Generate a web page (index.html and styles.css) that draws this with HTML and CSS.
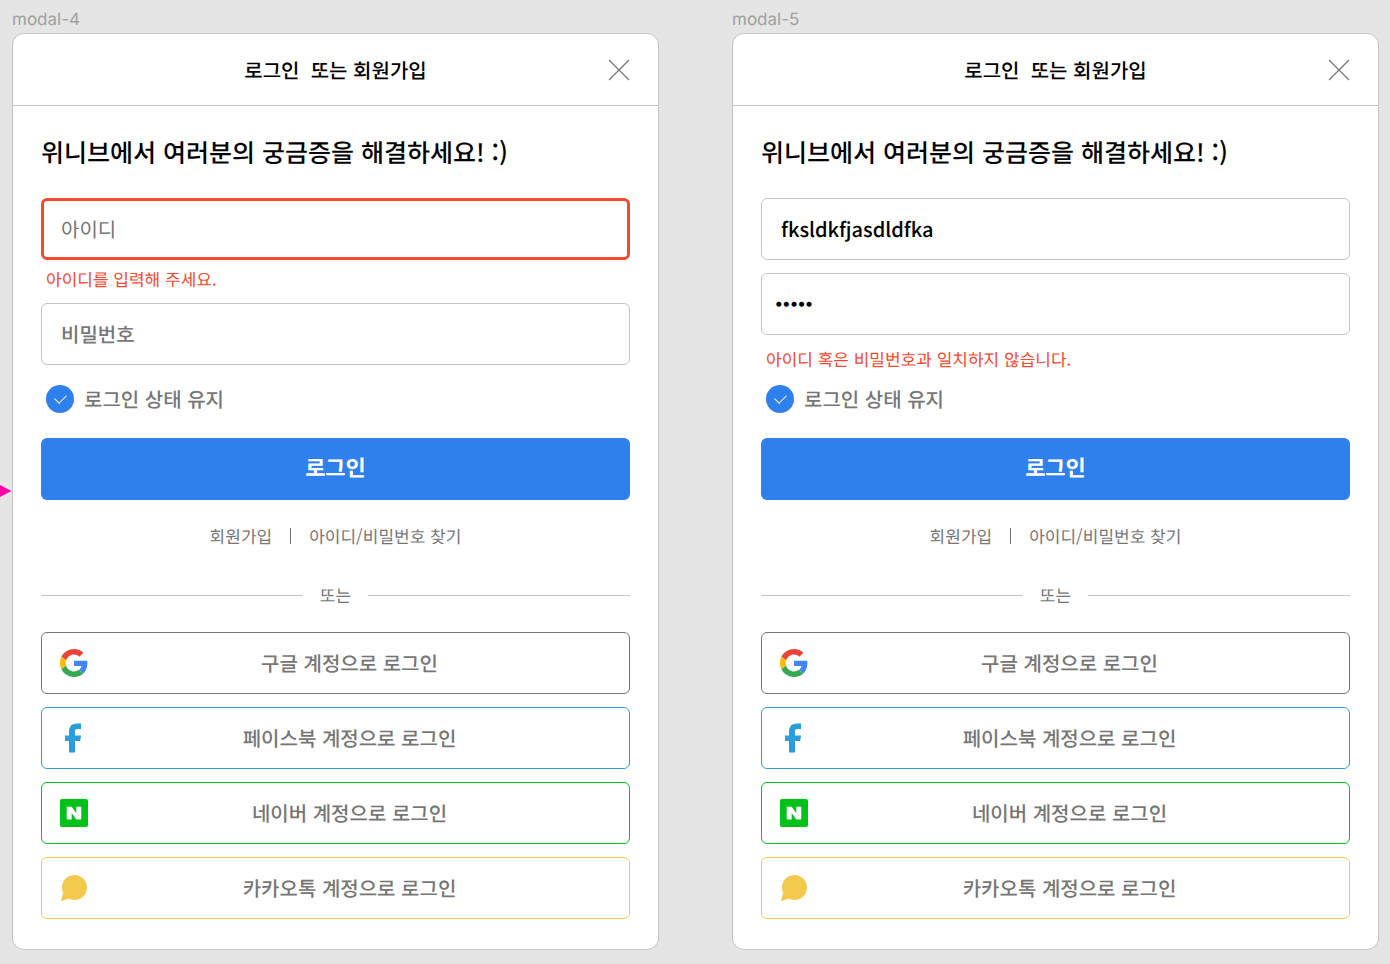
FILE: index.html
```html
<!DOCTYPE html>
<html lang="ko">
<head>
<meta charset="utf-8">
<meta name="viewport" content="width=device-width, initial-scale=1">
<title>로그인 또는 회원가입</title>
<link rel="stylesheet" href="styles.css">
</head>
<body>
<svg class="sprite" aria-hidden="true">
  <symbol id="close" viewBox="0 0 22 22"><path d="M1 1l20 20M21 1L1 21" fill="none" stroke="#767676" stroke-width="1.2"/></symbol>
  <symbol id="google" viewBox="0 0 48 48">
    <path fill="#ea4335" d="M24 9.500c3.540 0 6.710 1.220 9.210 3.600l6.850-6.850C35.900 2.380 30.470 0 24 0 14.620 0 6.510 5.380 2.560 13.220l7.980 6.190C12.430 13.720 17.740 9.500 24 9.500z"/>
    <path fill="#4285f4" d="M46.980 24.550c0-1.570-.15-3.090-.38-4.550H24v9.020h12.940c-.58 2.960-2.260 5.480-4.780 7.180l7.730 6c4.510-4.180 7.090-10.360 7.090-17.650z"/>
    <path fill="#fbbc05" d="M10.530 28.590c-.48-1.450-.76-2.990-.76-4.590s.27-3.140.76-4.590l-7.980-6.190C.92 16.460 0 20.120 0 24c0 3.880.92 7.540 2.560 10.780l7.970-6.190z"/>
    <path fill="#34a853" d="M24 48c6.480 0 11.930-2.130 15.890-5.810l-7.730-6c-2.150 1.450-4.920 2.300-8.160 2.300-6.260 0-11.570-4.220-13.470-9.910l-7.980 6.190C6.510 42.620 14.620 48 24 48z"/>
  </symbol>
  <symbol id="facebook" viewBox="0 0 28 30"><path fill="#2d9cdb" d="M9 29.500V18H5v-5.600h4V8.800C9 3.400 11.800 .5 17 .5h4v5.600h-3.500c-1.900 0-2.500.8-2.500 2.500v3.800h6l-.8 5.600H15v11.500z"/></symbol>
  <symbol id="naver" viewBox="0 0 28 28"><rect width="28" height="28" rx="2" fill="#00c11a"/><path fill="#fff" d="M6.700 7.700h5l4.600 6.600V7.700H21.300v12.800h-5l-4.600-6.600v6.600h-5z"/></symbol>
  <symbol id="kakao" viewBox="0 0 28 28"><path fill="#f2c94c" d="M14.500 1A12.500 12.500 0 1 1 8.700 24.600L.8 27.200 3.200 18.900A12.500 12.500 0 0 1 14.500 1z"/></symbol>
</svg>

<main class="board">
  <svg class="marker" viewBox="0 0 12 14" aria-hidden="true"><path d="M0 1l11.500 6L0 13z" fill="#ff00a8"/></svg>

  <section class="frame">
    <h2 class="frame-name">modal-4</h2>
    <div class="modal">
      <header class="modal-head">
        <h3 class="modal-title">로그인&nbsp; 또는 회원가입</h3>
        <button class="close" type="button" aria-label="닫기"><svg><use href="#close"/></svg></button>
      </header>
      <form class="modal-body">
        <p class="greeting">위니브에서 여러분의 궁금증을 해결하세요! :)</p>
        <input class="field field-error" type="text" placeholder="아이디" aria-label="아이디" aria-describedby="id-error">
        <p class="error error-between" id="id-error">아이디를 입력해 주세요.</p>
        <input class="field" type="password" placeholder="비밀번호" aria-label="비밀번호">
        <label class="keep keep-spaced"><input class="check" type="checkbox" checked><span>로그인 상태 유지</span></label>
        <button class="submit" type="button">로그인</button>
        <nav class="links"><a href="#join">회원가입</a><span class="bar"></span><a href="#find">아이디/비밀번호 찾기</a></nav>
        <div class="divider"><span>또는</span></div>
        <div class="socials">
          <button class="social google" type="button"><svg class="logo"><use href="#google"/></svg><span>구글 계정으로 로그인</span></button>
          <button class="social facebook" type="button"><svg class="logo logo-tall"><use href="#facebook"/></svg><span>페이스북 계정으로 로그인</span></button>
          <button class="social naver" type="button"><svg class="logo"><use href="#naver"/></svg><span>네이버 계정으로 로그인</span></button>
          <button class="social kakao" type="button"><svg class="logo"><use href="#kakao"/></svg><span>카카오톡 계정으로 로그인</span></button>
        </div>
      </form>
    </div>
  </section>

  <section class="frame">
    <h2 class="frame-name">modal-5</h2>
    <div class="modal">
      <header class="modal-head">
        <h3 class="modal-title">로그인&nbsp; 또는 회원가입</h3>
        <button class="close" type="button" aria-label="닫기"><svg><use href="#close"/></svg></button>
      </header>
      <form class="modal-body">
        <p class="greeting">위니브에서 여러분의 궁금증을 해결하세요! :)</p>
        <input class="field" type="text" value="fksldkfjasdldfka" aria-label="아이디">
        <input class="field field-secret" type="password" value="abcde" aria-label="비밀번호" aria-describedby="login-error">
        <p class="error error-after" id="login-error">아이디 혹은 비밀번호과 일치하지 않습니다.</p>
        <label class="keep"><input class="check" type="checkbox" checked><span>로그인 상태 유지</span></label>
        <button class="submit" type="button">로그인</button>
        <nav class="links"><a href="#join">회원가입</a><span class="bar"></span><a href="#find">아이디/비밀번호 찾기</a></nav>
        <div class="divider"><span>또는</span></div>
        <div class="socials">
          <button class="social google" type="button"><svg class="logo"><use href="#google"/></svg><span>구글 계정으로 로그인</span></button>
          <button class="social facebook" type="button"><svg class="logo logo-tall"><use href="#facebook"/></svg><span>페이스북 계정으로 로그인</span></button>
          <button class="social naver" type="button"><svg class="logo"><use href="#naver"/></svg><span>네이버 계정으로 로그인</span></button>
          <button class="social kakao" type="button"><svg class="logo"><use href="#kakao"/></svg><span>카카오톡 계정으로 로그인</span></button>
        </div>
      </form>
    </div>
  </section>
</main>
</body>
</html>
```
FILE: styles.css
```css
* { box-sizing: border-box; }

body {
  margin: 0;
  background: #e5e5e5;
  color: #000;
  font-family: "Noto Sans CJK KR", sans-serif;
  font-size: 20px;
  font-weight: 500;
  text-rendering: geometricPrecision;
}

h2, h3, p { margin: 0; font-weight: 500; }

button, input { font: inherit; text-rendering: inherit; }
button { cursor: pointer; }

.sprite { position: absolute; width: 0; height: 0; }

.board {
  position: relative;
  display: grid;
  grid-template-columns: 1fr 1fr;
  gap: 73px;
  padding: 8px 11px 14px 12px;
}

.marker {
  position: absolute;
  left: 0;
  top: 484px;
  width: 12px;
  height: 14px;
}

.frame-name {
  color: #a0a0a0;
  font: 400 17px/25px Inter, sans-serif;
}

.modal {
  background: #fff;
  border: 1px solid #c4c4c4;
  border-radius: 12px;
}

.modal-head {
  display: grid;
  grid-template-columns: 1fr auto 1fr;
  align-items: center;
  padding: 20px 28px;
  border-bottom: 1px solid #c4c4c4;
}

.modal-title {
  grid-column: 2;
  font-size: 20px;
  line-height: 31px;
}

.close {
  justify-self: end;
  padding: 0;
  border: 0;
  background: none;
}

.close svg { display: block; width: 22px; height: 22px; }

.modal-body { padding: 28px 28px 30px; }

.greeting {
  margin-bottom: 28px;
  font-size: 25px;
  line-height: 36px;
}

.field {
  display: block;
  width: 100%;
  height: 62px;
  padding: 0 19px 2px;
  border: 1px solid #c4c4c4;
  border-radius: 6px;
  background: #fff;
  color: #000;
  outline: 0;
}

.field::placeholder { color: #767676; opacity: 1; }
.field + .field { margin-top: 13px; }
.field-error { padding: 0 17px 2px; border: 3px solid #f4492f; font-weight: 400; }
.field-secret { padding: 0 13px 2px; font-family: Inter, sans-serif; font-size: 16px; font-weight: 700; }

.error {
  padding-left: 5px;
  color: #f4492f;
  font-size: 17px;
  font-weight: 400;
  line-height: 24px;
}

.error-between { margin: 7px 0 12px; }
.error-after { margin: 12px 0 14px; }

.keep {
  display: flex;
  align-items: center;
  gap: 10px;
  padding-left: 5px;
  color: #767676;
  line-height: 28px;
}

.keep-spaced { margin-top: 20px; }

.check {
  appearance: none;
  display: grid;
  place-items: center;
  width: 28px;
  height: 28px;
  margin: 0;
  border-radius: 50%;
  background: #2f80ed;
}

.check::after {
  content: "";
  width: 10px;
  height: 6px;
  margin-bottom: 3px;
  border: solid #fff;
  border-width: 0 0 1px 1px;
  transform: rotate(-45deg);
}

.submit {
  display: block;
  width: 100%;
  height: 62px;
  margin-top: 25px;
  padding: 0 0 4px;
  border: 0;
  border-radius: 6px;
  background: #2f80ed;
  color: #fff;
  font-size: 22px;
  font-weight: 700;
}

.links {
  display: flex;
  justify-content: center;
  align-items: center;
  gap: 18px;
  margin-top: 24px;
  font-size: 17px;
  font-weight: 400;
  line-height: 24px;
}

.links a { color: #767676; text-decoration: none; }
.bar { width: 1px; height: 16px; background: #767676; }

.divider {
  display: flex;
  align-items: center;
  gap: 17px;
  margin: 35px 0 25px;
  color: #767676;
  font-size: 17px;
  font-weight: 400;
  line-height: 24px;
}

.divider::before,
.divider::after {
  content: "";
  flex: 1;
  height: 1px;
  background: #c4c4c4;
}

.socials { display: grid; gap: 13px; }

.social {
  display: flex;
  align-items: center;
  height: 62px;
  padding: 0 18px;
  border: 1px solid;
  border-radius: 6px;
  background: #fff;
}

.social span { flex: 1; padding-bottom: 2px; color: #767676; }
.logo { width: 28px; height: 28px; }
.logo-tall { height: 30px; }

.google { border-color: #767676; }
.facebook { border-color: #2d9cdb; }
.naver { border-color: #00c11a; }
.kakao { border-color: #f2c94c; }
```
